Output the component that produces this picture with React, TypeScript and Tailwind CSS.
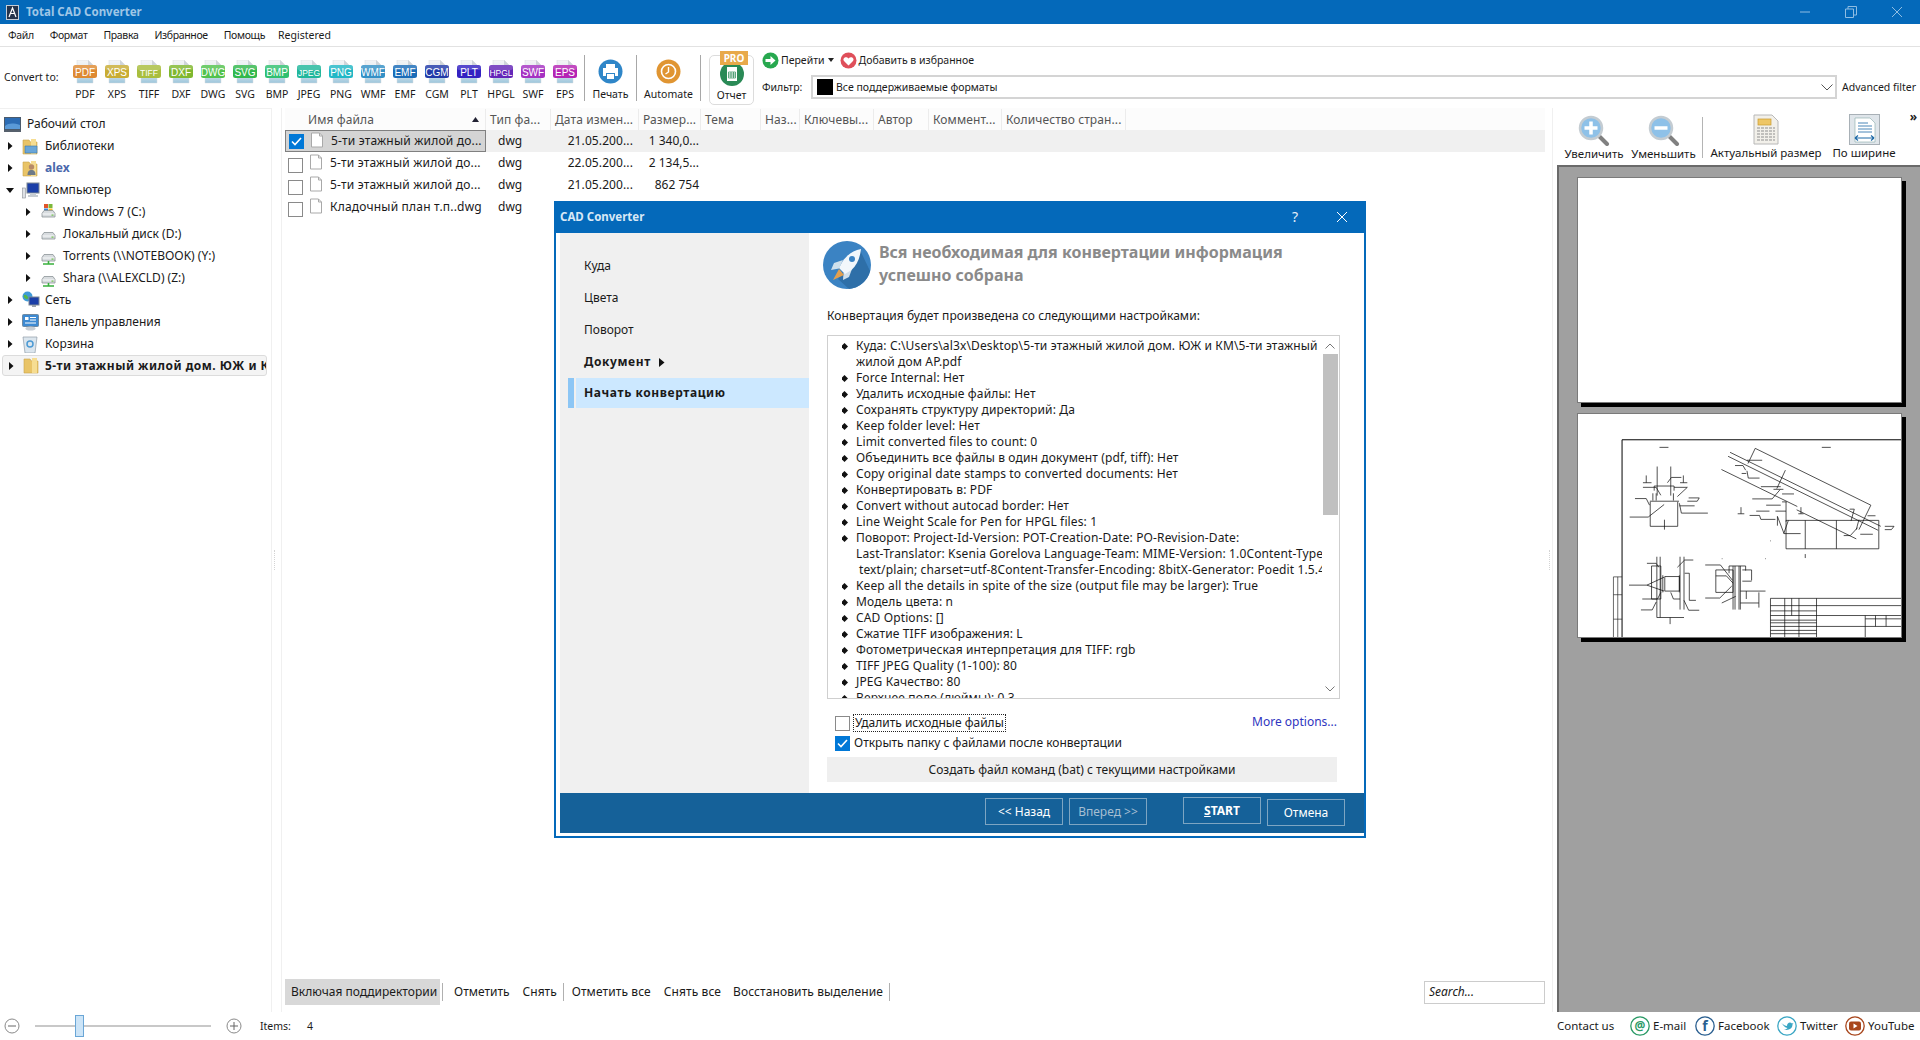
import React from "react";

const formats: [string, string][] = [
  ["PDF", "#de8a32"], ["XPS", "#c9ad34"], ["TIFF", "#a9be3e"], ["DXF", "#7fb82f"],
  ["DWG", "#52c24e"], ["SVG", "#32b84c"], ["BMP", "#2fc070"], ["JPEG", "#22b79c"],
  ["PNG", "#22b8c6"], ["WMF", "#3390c6"], ["EMF", "#1a6cb8"], ["CGM", "#223aa8"],
  ["PLT", "#3322c2"], ["HPGL", "#6426b8"], ["SWF", "#a532c2"], ["EPS", "#b524b4"],
];

function FormatIcon({ label, color }: { label: string; color: string }) {
  return (
    <svg width="26" height="24" viewBox="0 0 26 24">
      <defs>
        <linearGradient id={`pg-${label}`} x1="0" y1="0" x2="0" y2="1">
          <stop offset="0" stopColor="#f4f5f6" />
          <stop offset="0.55" stopColor="#dfe8ee" />
          <stop offset="1" stopColor="#9cc6dc" />
        </linearGradient>
      </defs>
      <path d="M5 0h11l5 5v18H5z" fill={`url(#pg-${label})`} stroke="#d5d9dd" strokeWidth="0.5" />
      <path d="M16 0v5h5z" fill="#cfd4d9" />
      <rect x="1" y="5" width="24" height="13" rx="2.5" fill={color} />
      <rect x="1" y="5" width="24" height="5" rx="2.500" fill="#fff" opacity="0.18" />
      <text x="13" y="15.500" textAnchor="middle" fontSize={label.length > 3 ? 8.5 : 10} fill="#fff" fontFamily="Liberation Sans, sans-serif">{label}</text>
    </svg>
  );
}

function ToolDivider() {
  return <div className="w-px h-[46px] bg-[#a8a8a8] self-center" />;
}

function Arrow({ open }: { open?: boolean }) {
  return open ? (
    <svg width="10" height="10" viewBox="0 0 10 10"><path d="M1 3h8L5 8z" fill="#111" /></svg>
  ) : (
    <svg width="10" height="10" viewBox="0 0 10 10"><path d="M3 1v8l4.5-4z" fill="#111" /></svg>
  );
}

function DriveIcon({ net, win }: { net?: boolean; win?: boolean }) {
  return (
    <svg width="17" height="17" viewBox="0 0 17 17">
      {win && (
        <g>
          <rect x="4" y="0" width="4" height="4" fill="#e0552a" />
          <rect x="8.5" y="0" width="4" height="4" fill="#7cb83a" />
          <rect x="4" y="4.5" width="4" height="4" fill="#3b86d8" />
          <rect x="8.5" y="4.5" width="4" height="4" fill="#f0bd2c" />
        </g>
      )}
      <path d="M2 9.5l2-3h9l2 3v3.5H2z" fill="#d8dcdf" stroke="#8d9498" strokeWidth="0.8" />
      <path d="M2.5 10h12" stroke="#fff" strokeWidth="0.8" />
      <rect x="11.5" y="10.5" width="2" height="1.2" fill="#6fbf4a" />
      {net && <path d="M8.5 13v2.5M3 16h11" stroke="#38b03c" strokeWidth="1.6" />}
    </svg>
  );
}

function FolderIcon({ kind }: { kind?: "lib" | "user" }) {
  return (
    <svg width="17" height="19" viewBox="0 0 17 19">
      <path d="M1 3h6l1.5 2H15v12H1z" fill="#e9c467" stroke="#c9a44a" strokeWidth="0.6" />
      <path d="M9 2h5v15H9z" fill="#f6dd92" />
      {kind === "lib" && <path d="M3 9h12v7H3z" fill="#6aa6d8" stroke="#3c78ac" strokeWidth="0.6" />}
      {kind === "user" && (
        <g>
          <circle cx="9.5" cy="8" r="2.7" fill="#b78a68" />
          <path d="M5.5 16c0-4 1.8-5 4-5s4 1 4 5z" fill="#6e7a88" />
        </g>
      )}
    </svg>
  );
}

function MonitorIcon({ kind }: { kind: "desktop" | "pc" | "net" | "panel" }) {
  if (kind === "desktop")
    return (
      <svg width="17" height="15" viewBox="0 0 17 15">
        <rect x="0.5" y="0.5" width="16" height="12" fill="#2c6cb4" stroke="#4a5a6c" />
        <path d="M1 9c4-3 8-3 15-1v4H1z" fill="#5a9ad8" />
        <rect x="0" y="13" width="17" height="2" fill="#56606c" />
      </svg>
    );
  if (kind === "pc")
    return (
      <svg width="18" height="17" viewBox="0 0 18 17">
        <rect x="0.5" y="6" width="3" height="10" fill="#dfe2e6" stroke="#8a9096" strokeWidth="0.6" />
        <rect x="5" y="1" width="12" height="10" fill="#1b3fa8" stroke="#7d8894" />
        <path d="M8 11h6v2h2v2H6v-2h2z" fill="#c6ccd2" />
      </svg>
    );
  if (kind === "net")
    return (
      <svg width="18" height="18" viewBox="0 0 18 18">
        <circle cx="5.5" cy="5.5" r="5" fill="#3f9ad8" />
        <path d="M2 4c2-1 3 1 4 2s-1 3-2 2-3-2-2-4z" fill="#55b848" />
        <rect x="7" y="6" width="10" height="8" fill="#1b3fa8" stroke="#7d8894" />
        <path d="M10 14h4v2h-4z" fill="#9aa2aa" />
      </svg>
    );
  return (
    <svg width="17" height="17" viewBox="0 0 17 17">
      <rect x="0.5" y="0.5" width="16" height="12" rx="1" fill="#3d8ad2" stroke="#6f8aa2" />
      <rect x="3" y="3" width="3.5" height="3" fill="#fff" />
      <path d="M8 3.5h6M8 6h6M3 9h11" stroke="#fff" />
      <ellipse cx="8.5" cy="14.5" rx="5" ry="2" fill="#c8ced4" />
    </svg>
  );
}

function BinIcon() {
  return (
    <svg width="16" height="18" viewBox="0 0 16 18">
      <path d="M1 2h14l-2 16H3z" fill="#dce6ee" stroke="#8f9ca8" strokeWidth="0.7" />
      <circle cx="8" cy="9" r="3" fill="none" stroke="#4c9ad4" strokeWidth="1.5" />
    </svg>
  );
}

const tree: { level: number; label: string; icon: React.ReactNode; arrow?: "open" | "closed"; cls?: string }[] = [
  { level: 0, label: "Рабочий стол", icon: <MonitorIcon kind="desktop" /> },
  { level: 1, label: "Библиотеки", icon: <FolderIcon kind="lib" />, arrow: "closed" },
  { level: 1, label: "alex", icon: <FolderIcon kind="user" />, arrow: "closed", cls: "font-bold text-[#4a68ac]" },
  { level: 1, label: "Компьютер", icon: <MonitorIcon kind="pc" />, arrow: "open" },
  { level: 2, label: "Windows 7 (C:)", icon: <DriveIcon win />, arrow: "closed" },
  { level: 2, label: "Локальный диск (D:)", icon: <DriveIcon />, arrow: "closed" },
  { level: 2, label: "Torrents (\\\\NOTEBOOK) (Y:)", icon: <DriveIcon net />, arrow: "closed" },
  { level: 2, label: "Shara (\\\\ALEXCLD) (Z:)", icon: <DriveIcon net />, arrow: "closed" },
  { level: 1, label: "Сеть", icon: <MonitorIcon kind="net" />, arrow: "closed" },
  { level: 1, label: "Панель управления", icon: <MonitorIcon kind="panel" />, arrow: "closed" },
  { level: 1, label: "Корзина", icon: <BinIcon />, arrow: "closed" },
];

const columns: [string, string][] = [
  ["Имя файла", "w-[201px]"], ["Тип фа...", "w-[65px]"], ["Дата измен...", "w-[88px]"], ["Размер...", "w-[62px]"],
  ["Тема", "w-[60px]"], ["Наз...", "w-[39px]"], ["Ключевы...", "w-[74px]"], ["Автор", "w-[55px]"],
  ["Коммент...", "w-[73px]"], ["Количество стран...", "w-[124px]"],
];

const files = [
  { name: "5-ти этажный жилой до...", date: "21.05.200...", size: "1 340,0...", checked: true },
  { name: "5-ти этажный жилой до...", date: "22.05.200...", size: "2 134,5..." },
  { name: "5-ти этажный жилой до...", date: "21.05.200...", size: "862 754" },
  { name: "Кладочный план т.п..dwg", date: "", size: "" },
];

function FileIcon() {
  return (
    <svg width="14" height="16" viewBox="0 0 14 16" className="shrink-0 block">
      <path d="M1.5 1h8l3 3v11h-11z" fill="#fff" stroke="#a9a9a9" />
      <path d="M9.5 1v3h3" fill="none" stroke="#a9a9a9" />
    </svg>
  );
}

function Check({ on }: { on?: boolean }) {
  return on ? (
    <span className="w-[15px] h-[15px] bg-[#0078d7] flex items-center justify-center shrink-0">
      <svg width="13" height="13" viewBox="0 0 13 13"><path d="M2 6.5l3 3 6-6.5" fill="none" stroke="#fff" strokeWidth="1.6" /></svg>
    </span>
  ) : (
    <span className="block w-[15px] h-[15px] bg-white border border-[#8a8a8a] shrink-0" />
  );
}

const summary: { text: string; bullet?: boolean; cls?: string }[] = [
  { text: "Куда: C:\\Users\\al3x\\Desktop\\5-ти этажный жилой дом. ЮЖ и КМ\\5-ти этажный", bullet: true },
  { text: "жилой дом АР.pdf" },
  { text: "Force Internal: Нет", bullet: true },
  { text: "Удалить исходные файлы: Нет", bullet: true },
  { text: "Сохранять структуру директорий: Да", bullet: true },
  { text: "Keep folder level: Нет", bullet: true },
  { text: "Limit converted files to count: 0", bullet: true },
  { text: "Объединить все файлы в один документ (pdf, tiff): Нет", bullet: true },
  { text: "Copy original date stamps to converted documents: Нет", bullet: true },
  { text: "Конвертировать в: PDF", bullet: true },
  { text: "Convert without autocad border: Нет", bullet: true },
  { text: "Line Weight Scale for Pen for HPGL files: 1", bullet: true },
  { text: "Поворот: Project-Id-Version: POT-Creation-Date: PO-Revision-Date:", bullet: true },
  { text: "Last-Translator: Ksenia Gorelova Language-Team: MIME-Version: 1.0Content-Type:" },
  { text: "text/plain; charset=utf-8Content-Transfer-Encoding: 8bitX-Generator: Poedit 1.5.4", cls: "pl-[3px]" },
  { text: "Keep all the details in spite of the size (output file may be larger): True", bullet: true },
  { text: "Модель цвета: n", bullet: true },
  { text: "CAD Options: []", bullet: true },
  { text: "Сжатие TIFF изображения: L", bullet: true },
  { text: "Фотометрическая интерпретация для TIFF: rgb", bullet: true },
  { text: "TIFF JPEG Quality (1-100): 80", bullet: true },
  { text: "JPEG Качество: 80", bullet: true },
  { text: "Верхнее поле (дюймы): 0.3", bullet: true },
];

function Drawing() {
  const d = [
    "M356 141h27M846 141h27",
    "M349 199v88M390 199v88M316 226v22M306 248h26M428 226v22M418 248h22M380 248l12-16h30M340 258h60v14M340 258v14M306 262h40l14 24M400 262h40l-30 28",
    "M336 280v22M346 280v22M398 280v22M327 304h88M282 296h34l10 20M444 294h32l-6 10h-30M328 306v74h83v-74M266 352h56l48-38M416 310l6 30h80M416 318h46M371 360v30",
    "M645 144L994 316M569 156L1024 380M563 168L1016 392M543 208L772 320M770 330L950 418M645 144l-22 46M994 316l-36 74M736 210l-26 56M620 180h46M584 196h24l8 14M620 212l4 22h34M604 220h14M662 260h60M636 297h60l24-28M678 316h44M706 334h32M648 334h40M628 347h30l4 12h44M700 268h30M726 282h36M726 306h14M738 306v60",
    "M592 342h20M602 322v20M775 342h16M783 322v20",
    "M738 362H1018v86H738zM796 362v86M890 362v86M712 350l20 52h50M712 350v28M745 362l-14 40M958 360l-8 30M912 408h20l22-24M962 404h38M1036 380h28l-8 10h-20M984 348h24M930 328h14l-10 36",
    "M796 464v12M690 424h2M544 478h2M675 478h2",
    "M348 472v184M358 472v184M418 472v160M430 472v160M332 500h28v100h-28zM372 532h44v44h-44zM366 528v52M416 528v52M348 656h82M388 656v20M264 558h54M318 492h28l8 12M304 600h46l10-20M300 633h34l12-24M410 504l22-22h26M430 604l14 30h32M318 558l52-24M318 558l52 18M432 522h14v82h20M390 580l8 20h20",
    "M526 512h52v68h-52zM566 500h50v14M566 500v22M584 500v132M600 500v132M606 512h28v32M606 546h28M526 530h32l20 22M494 497h46l36 46M494 597h44l36-36M544 612l42-20M600 576h76M618 576v24M656 580v46M600 612h56M578 500v132M596 500v132",
    "M691 715V598h394M691 620h394M691 650h394M691 683h394M830 598v117M691 636h139M691 664h139M691 672h139M691 695h139M691 705h139M734 598v117M755 598v52M777 598v117M977 650v65M1008 650v33M1040 650v33M977 660h108",
  ];
  return (
    <svg viewBox="110 40 975 675" className="w-full h-full block" preserveAspectRatio="none">
      <path d="M243 715V118H1085" fill="none" stroke="#000" strokeWidth="3" />
      <path d="M217 715V533h26M230 533v182M217 587h26M217 661h26" fill="none" stroke="#222" strokeWidth="2" />
      <path d={d.join(" ")} fill="none" stroke="#111" strokeWidth="2.2" />
    </svg>
  );
}

function Page({ h, children }: { h: string; children?: React.ReactNode }) {
  return (
    <div className={`relative w-[325px] ${h} ml-[18px] shrink-0`}>
      <div className="absolute left-[4px] top-[4px] right-[-4px] bottom-[-4px] bg-black" />
      <div className="absolute inset-0 bg-white border border-[#7a7a7a]">{children}</div>
    </div>
  );
}

function Magnifier({ plus }: { plus?: boolean }) {
  return (
    <svg width="32" height="31" viewBox="0 0 32 31">
      <path d="M21 21l8 8" stroke="#808080" strokeWidth="4" strokeLinecap="round" />
      <circle cx="13" cy="13" r="11" fill="#8ec1e8" stroke="#c4ccd2" strokeWidth="2.5" />
      {plus ? <path d="M6.5 13h13M13 6.5v13" stroke="#fff" strokeWidth="3.5" /> : <path d="M6.5 13h13" stroke="#fff" strokeWidth="3.5" />}
    </svg>
  );
}

function Social({ color, fill, children }: { color: string; fill?: string; children: React.ReactNode }) {
  return (
    <svg width="20" height="20" viewBox="0 0 20 20" className="shrink-0 block">
      <circle cx="10" cy="10" r="9.2" fill={fill ?? "#fff"} stroke={color} strokeWidth="1.3" />
      {children}
    </svg>
  );
}

const dlgMenu = ["Куда", "Цвета", "Поворот"];

export default function App() {
  return (
    <div className="relative w-[1920px] h-[1040px] overflow-hidden bg-white flex flex-col text-[12px] leading-[16px] text-[#1a1a1a] font-['Noto_Sans','Liberation_Sans',sans-serif]">
      {/* title bar */}
      <div className="h-6 shrink-0 bg-[#0469ba] flex items-center pl-[6px] text-white">
        <svg width="13" height="15" viewBox="0 0 13 15"><rect x="0.5" y="0.5" width="12" height="14" fill="#24344c" stroke="#c5ccd6" /><path d="M3 12L6.5 3 10 12M4.5 8.5h4" fill="none" stroke="#fff" strokeWidth="1.2" /></svg>
        <span className="ml-[7px] font-bold text-[11.5px] text-[#9fc6e6]">Total CAD Converter</span>
        <div className="ml-auto flex items-center text-[#8fbde2]">
          <svg width="12" height="12" viewBox="0 0 12 12"><path d="M1 6h10" stroke="currentColor" /></svg>
          <svg className="ml-[34px]" width="12" height="12" viewBox="0 0 12 12"><path d="M.5 3h8v8.5h-8zM3 3V.5h8.5V9H8.5" fill="none" stroke="currentColor" /></svg>
          <svg className="ml-[34px] mr-[17px]" width="12" height="12" viewBox="0 0 12 12"><path d="M1 1l10 10M11 1L1 11" stroke="currentColor" /></svg>
        </div>
      </div>

      {/* menu */}
      <div className="h-[23px] shrink-0 border-b border-[#e2e2e2] flex items-center pl-[8px] gap-[16px] text-[10.5px]">
        {["Файл", "Формат", "Правка", "Избранное", "Помощь"].map((m) => (
          <span key={m} className="tracking-[-0.35px]">{m}</span>
        ))}
        <span className="-ml-[3px]">Registered</span>
      </div>

      {/* toolbar */}
      <div className="h-[61px] shrink-0 flex items-stretch text-[10.5px]">
        <div className="w-[69px] pl-[4px] self-center pb-[2px] whitespace-nowrap">Convert to:</div>
        <div className="flex pt-[13px] pr-[3px]">
          {formats.map(([l, c]) => (
            <div key={l} className="w-[32px] flex flex-col items-center">
              <FormatIcon label={l} color={c} />
              <span className="mt-[2px]">{l}</span>
            </div>
          ))}
        </div>
        <ToolDivider />
        <div className="w-[51px] flex flex-col items-center pt-[12px]">
          <svg width="25" height="25" viewBox="0 0 25 25"><circle cx="12.5" cy="12.5" r="12" fill="#2f86c8" /><path d="M8 5h9v4H8zM5 9h15v8h-3v-3H8v3H5zM9 15h7v5H9z" fill="#fff" /></svg>
          <span className="mt-[2px]">Печать</span>
        </div>
        <ToolDivider />
        <div className="w-[63px] flex flex-col items-center pt-[12px]">
          <svg width="25" height="25" viewBox="0 0 25 25"><circle cx="12.5" cy="12.5" r="12" fill="#e09532" /><circle cx="12.5" cy="12.5" r="7" fill="none" stroke="#fff" strokeWidth="1.6" /><path d="M12.5 8v5l-3 2" fill="none" stroke="#fff" strokeWidth="1.4" /></svg>
          <span className="mt-[2px]">Automate</span>
        </div>
        <ToolDivider />
        <div className="ml-[8px] mt-[8px] mb-[3px] w-[45px] relative border border-[#dcdcdc] rounded-[5px] flex flex-col items-center justify-end pb-[1px]">
          <span className="absolute top-[-5px] left-[10px] w-[28px] h-[14px] bg-[#e8a94a] text-white text-[10px] leading-[14px] text-center font-bold">PRO</span>
          <svg className="mb-[1px]" width="24" height="24" viewBox="0 0 24 24"><circle cx="12" cy="12" r="12" fill="#2a8a56" /><rect x="7" y="5" width="10" height="14" fill="#fff" /><path d="M8.5 10h7v6h-7zM8.5 12h7M8.5 14h7M11 10v6M13.5 10v6" fill="none" stroke="#2a8a56" strokeWidth="0.7" /></svg>
          <span>Отчет</span>
        </div>
        <div className="flex-1 pl-[8px] flex flex-col">
          <div className="h-[26px] flex items-center">
            <svg width="17" height="17" viewBox="0 0 17 17"><circle cx="8.5" cy="8.5" r="8" fill="#27a84f" /><path d="M3.5 7h5V4l5 4.5-5 4.5v-3h-5z" fill="#fff" /></svg>
            <span className="ml-[2px]">Перейти</span>
            <svg className="ml-[3px]" width="6" height="4" viewBox="0 0 6 4"><path d="M0 0h6L3 4z" fill="#222" /></svg>
            <svg className="ml-[6px]" width="17" height="17" viewBox="0 0 17 17"><circle cx="8.5" cy="8.5" r="8" fill="#df4f5a" /><path d="M8.5 13.5L4 9c-2-2.5 2-5.5 4.5-2.5C11 3.500 15 6.500 13 9z" fill="#fff" /></svg>
            <span className="ml-[2px]">Добавить в избранное</span>
          </div>
          <div className="flex items-center pr-[6px] mt-[2px]">
            <span className="w-[49px]">Фильтр:</span>
            <div className="flex-1 h-[24px] border-2 border-[#d4d4d4] flex items-center pl-[4px] pr-[2px]">
              <span className="w-4 h-4 bg-black" />
              <span className="ml-[3px]">Все поддерживаемые форматы</span>
              <svg className="ml-auto" width="12" height="7" viewBox="0 0 12 7"><path d="M.5.5L6 6 11.500.5" fill="none" stroke="#555" /></svg>
            </div>
            <span className="ml-[5px] w-[72px] whitespace-nowrap">Advanced filter</span>
          </div>
        </div>
      </div>

      {/* main */}
      <div className="flex-1 min-h-0 flex">
        {/* tree */}
        <div className="w-[272px] shrink-0 pt-[4px] pl-[2px] pr-[4px] border-t border-[#f0f0f0] border-r">
          {tree.map((t) => (
            <div key={t.label} className={`h-[22px] flex items-center ${t.level === 0 ? "pl-[2px]" : t.level === 1 ? "pl-[3px]" : "pl-[21px]"}`}>
              {t.level > 0 && <span className="w-[12px] shrink-0 flex items-center"><Arrow open={t.arrow === "open"} /></span>}
              <span className={`shrink-0 flex items-center ${t.level === 0 ? "w-[23px]" : "w-[28px] pl-[5px]"}`}>{t.icon}</span>
              <span className={`whitespace-nowrap ${t.cls ?? ""}`}>{t.label}</span>
            </div>
          ))}
          <div className="h-[21px] flex items-center pl-[3px] border border-[#dcdcdc] rounded-[3px] bg-[#f4f4f4] overflow-hidden">
            <span className="w-[12px] shrink-0 flex items-center"><Arrow /></span>
            <span className="w-[27px] shrink-0 flex items-center pl-[5px]"><FolderIcon /></span>
            <span className="whitespace-nowrap font-bold tracking-[0.5px]">5-ти этажный жилой дом. ЮЖ и КМ</span>
          </div>
        </div>

        {/* left gutter */}
        <div className="w-[13px] shrink-0 flex items-center">
          <div className="ml-[2px] w-[2px] h-[20px] border-l border-dotted border-[#d4d4d4]" />
          <div className="ml-auto mr-[3px] w-px h-full bg-[#f0f0f0]" />
        </div>

        {/* list */}
        <div className="w-[1260px] shrink-0 flex flex-col">
          <div className="h-[22px] flex items-center bg-[#fcfcfc] text-[#555] pt-[1px] tracking-[0.1px]">
            {columns.map(([c, w], i) => (
              <div key={c} className={`${w} h-full flex items-center border-r border-[#ececec] whitespace-nowrap ${i === 0 ? "pl-[23px] pr-[6px] justify-between" : "pl-[4px]"}`}>
                <span>{c}</span>
                {i === 0 && <svg width="7" height="5" viewBox="0 0 7 5"><path d="M0 5h7L3.500 0z" fill="#223" /></svg>}
              </div>
            ))}
          </div>
          {files.map((f) => (
            <div key={f.name + f.date} className={`h-[22px] flex items-center ${f.checked ? "bg-[#f0f0f0]" : ""}`}>
              <div className={`w-[201px] h-full flex items-center pl-[3px] ${f.checked ? "bg-[#d4d4d4] border border-[#808080]" : ""}`}>
                <span className={`block ${f.checked ? "" : "mt-[4px]"}`}><Check on={f.checked} /></span>
                <span className="block ml-[6px] -mt-[2px]"><FileIcon /></span>
                <span className="ml-[7px] whitespace-nowrap tracking-[0.2px]">{f.name}</span>
              </div>
              <div className="w-[65px] pl-[12px]">dwg</div>
              <div className="w-[88px] pr-[6px] text-right tracking-[0.1px]">{f.date}</div>
              <div className="w-[62px] pr-[2px] text-right">{f.size}</div>
            </div>
          ))}
          <div className="mt-auto h-[26px] mb-[7px] flex items-center">
            <div className="h-full bg-[#d8d8d8] px-[6px] flex items-center whitespace-nowrap w-[155px]">Включая поддиректории</div>
            <div className="ml-[2px] w-px h-[18px] bg-[#b0b0b0]" />
            <span className="ml-[11px]">Отметить</span>
            <span className="ml-[13px]">Снять</span>
            <div className="ml-[6px] w-px h-[18px] bg-[#b0b0b0]" />
            <span className="ml-[8px] tracking-[0.1px]">Отметить все</span>
            <span className="ml-[13px] tracking-[0.1px]">Снять все</span>
            <span className="ml-[12px] tracking-[0.1px]">Восстановить выделение</span>
            <div className="ml-[6px] w-px h-[18px] bg-[#b0b0b0]" />
            <div className="ml-auto w-[121px] h-[23px] border border-[#cccccc] italic flex items-center pl-[4px]">Search...</div>
          </div>
        </div>

        {/* right gutter */}
        <div className="w-[12px] shrink-0 flex items-center">
          <div className="ml-[4px] w-[2px] h-[20px] border-l border-dotted border-[#d4d4d4]" />
          <div className="ml-[1px] w-px h-full bg-[#f0f0f0]" />
        </div>

        {/* preview */}
        <div className="w-[363px] shrink-0 flex flex-col">
          <div className="h-[57px] shrink-0 flex text-[11.5px] relative">
            <div className="w-[74px] flex flex-col items-center pt-[7px]"><Magnifier plus /><span className="whitespace-nowrap">Увеличить</span></div>
            <div className="w-[65px] flex flex-col items-center pt-[7px]"><Magnifier /><span className="whitespace-nowrap">Уменьшить</span></div>
            <div className="w-px h-[41px] bg-[#b4b4b4] mt-[9px] ml-[6px]" />
            <div className="w-[126px] flex flex-col items-center pt-[6px]">
              <svg width="26" height="31" viewBox="0 0 26 31"><path d="M1 1h18l6 6v23H1z" fill="#f2f0ea" stroke="#b8b8b8" /><rect x="5" y="5" width="13" height="6" fill="#eec666" stroke="#c89a30" strokeWidth="0.7" /><path d="M4 14h18M4 17h18M4 20h18M4 23h18M4 26h18" stroke="#8f8f8f" strokeDasharray="3 1" /></svg>
              <span className="whitespace-nowrap">Актуальный размер</span>
            </div>
            <div className="w-[70px] flex flex-col items-center pt-[6px]">
              <svg width="31" height="31" viewBox="0 0 31 31"><rect x="0.500" y="0.500" width="30" height="30" fill="#dfe5ea" stroke="#a8b0b6" /><path d="M6 4h15l5 5v19H6z" fill="#fff" stroke="#8aa" strokeWidth="0.6" /><path d="M9 9h10M9 12h14M9 15h14M9 18h14" stroke="#4a86b8" /><path d="M6 24h19M6 24l3-2.500M6 24l3 2.500M25 24l-3-2.500M25 24l-3 2.500" stroke="#1f6aa8" fill="none" strokeWidth="1.200" /></svg>
              <span className="whitespace-nowrap">По ширине</span>
            </div>
            <span className="absolute right-[3px] top-[1px] text-[12px] font-bold text-[#222]">»</span>
          </div>
          <div className="flex-1 min-h-0 bg-[#a0a0a0] border-l-2 border-t-2 border-[#6a6a6a] pt-[10px] flex flex-col gap-[10px] overflow-hidden">
            <Page h="h-[226px]" />
            <Page h="h-[225px]"><Drawing /></Page>
          </div>
        </div>
      </div>

      {/* status */}
      <div className="h-[28px] shrink-0 flex items-center">
        <svg className="ml-[4px]" width="16" height="16" viewBox="0 0 16 16"><circle cx="8" cy="8" r="7" fill="none" stroke="#8a8a8a" /><path d="M4 8h8" stroke="#666" /></svg>
        <div className="relative ml-[15px] w-[176px] h-[2px] bg-[#c8c8c8]">
          <div className="absolute left-[40px] top-[-10px] w-[9px] h-[22px] bg-[#cce4f7] border border-[#6aa6d6]" />
        </div>
        <svg className="ml-[15px]" width="16" height="16" viewBox="0 0 16 16"><circle cx="8" cy="8" r="7" fill="none" stroke="#8a8a8a" /><path d="M4 8h8M8 4v8" stroke="#666" /></svg>
        <span className="ml-[18px] text-[10.500px]">Items:</span>
        <span className="ml-[16px] text-[10.500px]">4</span>
        <div className="ml-auto w-[363px] flex items-center text-[11.5px] whitespace-nowrap">
          <span className="w-[57px]">Contact us</span>
          <span className="ml-[16px]"><Social color="#2a9a66"><text x="10" y="14" textAnchor="middle" fontSize="12" fontWeight="700" fill="#2a9a66">@</text></Social></span>
          <span className="ml-[3px] w-[34px]">E-mail</span>
          <span className="ml-[8px]"><Social color="#2a5f90"><text x="10" y="15" textAnchor="middle" fontSize="14" fontWeight="700" fill="#2a5f90">f</text></Social></span>
          <span className="ml-[3px] w-[51px]">Facebook</span>
          <span className="ml-[8px]"><Social color="#3aa6c4"><path d="M4.500 7c2 2 4 3 5.500 3 0-3 3-4.500 5-2.500l1.500-.5-1 1.500c0 4-4 6.500-9 5 2 0 3-.5 4-1.500-2 0-5-3-5.500-5z" fill="#3aa6c4" /></Social></span>
          <span className="ml-[3px] w-[37px]">Twitter</span>
          <span className="ml-[8px]"><Social color="#a8461c"><rect x="4" y="5.500" width="12" height="9" rx="2" fill="#a8461c" /><path d="M8.500 7.500v5L12.500 10z" fill="#fff" /></Social></span>
          <span className="ml-[3px] w-[48px]">YouTube</span>
        </div>
      </div>

      {/* dialog */}
      <div className="absolute left-[554px] top-[201px] w-[812px] h-[637px] bg-white border-x-2 border-b-2 border-[#0469ba] flex flex-col">
        <div className="h-[32px] shrink-0 -mx-[2px] bg-[#0469ba] flex items-center text-white pl-[6px]">
          <span className="font-bold text-[11.500px] text-[#d8e8f6]">CAD Converter</span>
          <span className="ml-auto text-[14px] mr-[38px] text-[#e4eff8]">?</span>
          <svg className="mr-[18px]" width="12" height="12" viewBox="0 0 12 12"><path d="M1 1l10 10M11 1L1 11" stroke="#fff" /></svg>
        </div>
        <div className="flex-1 min-h-0 flex pl-[4px]">
          <div className="w-[249px] shrink-0 bg-[#f0f0f0] pt-[17px] flex flex-col">
            {dlgMenu.map((m) => (
              <div key={m} className="h-[32px] pl-[24px] flex items-center">{m}</div>
            ))}
            <div className="h-[32px] pl-[24px] flex items-center font-bold tracking-[0.6px]">
              Документ
              <svg className="ml-[8px]" width="6" height="9" viewBox="0 0 6 9"><path d="M0 0v9l5.500-4.500z" fill="#111" /></svg>
            </div>
            <div className="h-[30px] ml-[8px] flex items-stretch">
              <div className="w-[6px] bg-[#8cc6f5]" />
              <div className="w-[2px]" />
              <div className="flex-1 bg-[#cce8ff] pl-[8px] flex items-center font-bold tracking-[0.6px]">Начать конвертацию</div>
            </div>
          </div>
          <div className="flex-1 min-w-0 flex flex-col pl-[18px] pr-[27px]">
            <div className="h-[64px] shrink-0 pt-[8px] -ml-[4px] flex">
              <svg width="48" height="48" viewBox="0 0 48 48" className="shrink-0">
                <circle cx="24" cy="24" r="24" fill="#3b83c3" />
                <path d="M37 9L47 30a24 24 0 0 1-21 18L15 38z" fill="#2e6fa8" />
                <path d="M20 19l-9 3-3 7 8-1.500zM29 28l-3 8-6 3 .5-7.500z" fill="#cfe0ec" />
                <path d="M38 8c-8 1.500-14 6-18.500 12.500L16 27l6 6 6.500-4C34 24 37 17 38 8z" fill="#f2f7fb" />
                <circle cx="29" cy="18" r="3" fill="#3b83c3" />
                <path d="M16 28l-6 11 11-5z" fill="#e3a04f" />
              </svg>
              <div className="ml-[8px] text-[16px] leading-[23px] font-bold text-[#8a8a8a]">
                Вся необходимая для конвертации информация<br />успешно собрана
              </div>
            </div>
            <div className="mt-[11px] h-[16px] shrink-0 tracking-[0.05px]">Конвертация будет произведена со следующими настройками:</div>
            <div className="mt-[11px] h-[364px] shrink-0 -mr-[3px] border border-[#cfcfcf] flex overflow-hidden">
              <div className="flex-1 min-w-0 pt-[2px] pl-[14px] overflow-hidden tracking-[0.13px]">
                {summary.map((s, i) => (
                  <div key={i} className="h-[16px] flex whitespace-nowrap overflow-hidden">
                    <span className="w-[14px] shrink-0 flex items-center">
                      {s.bullet && <span className="w-[5px] h-[5px] bg-[#111] rotate-45" />}
                    </span>
                    <span className={s.cls ?? ""}>{s.text}</span>
                  </div>
                ))}
              </div>
              <div className="w-[17px] shrink-0 flex flex-col items-center pr-[1px]">
                <svg className="mt-[7px] mb-[5px]" width="10" height="6" viewBox="0 0 10 6"><path d="M.5 5.500L5 1l4.500 4.500" fill="none" stroke="#777" /></svg>
                <div className="w-[15px] h-[161px] bg-[#c0c0c0]" />
                <svg className="mt-auto mb-[6px]" width="10" height="6" viewBox="0 0 10 6"><path d="M.5.5L5 5 9.500.5" fill="none" stroke="#777" /></svg>
              </div>
            </div>
            <div className="mt-[15px] pl-[8px] flex items-center h-[18px] shrink-0">
              <Check />
              <span className="ml-[3px] px-[1px] border border-dotted border-[#222] leading-[16px]">Удалить исходные файлы</span>
              <span className="ml-auto -mt-[3px] text-[#2f35c0]">More options...</span>
            </div>
            <div className="mt-[2px] pl-[8px] flex items-center h-[18px] shrink-0">
              <Check on />
              <span className="ml-[4px]">Открыть папку с файлами после конвертации</span>
            </div>
            <div className="mt-[5px] h-[25px] shrink-0 bg-[#efefef] flex items-center justify-center">Создать файл команд (bat) с текущими настройками</div>
          </div>
        </div>
        <div className="h-[40px] shrink-0 ml-[4px] mb-[3px] bg-[#156199] flex items-start text-white">
          <div className="ml-[425px] mt-[5px] w-[78px] h-[27px] border border-[#7da5c2] flex items-center justify-center">&lt;&lt; Назад</div>
          <div className="ml-[6px] mt-[5px] w-[78px] h-[27px] border border-[#7da5c2] flex items-center justify-center text-[#a6bfd2]">Вперед &gt;&gt;</div>
          <div className="ml-[36px] mt-[4px] w-[78px] h-[27px] border border-[#7da5c2] flex items-center justify-center font-bold"><span className="underline">S</span>TART</div>
          <div className="ml-[6px] mt-[6px] w-[78px] h-[27px] border border-[#7da5c2] flex items-center justify-center">Отмена</div>
        </div>
      </div>
    </div>
  );
}
